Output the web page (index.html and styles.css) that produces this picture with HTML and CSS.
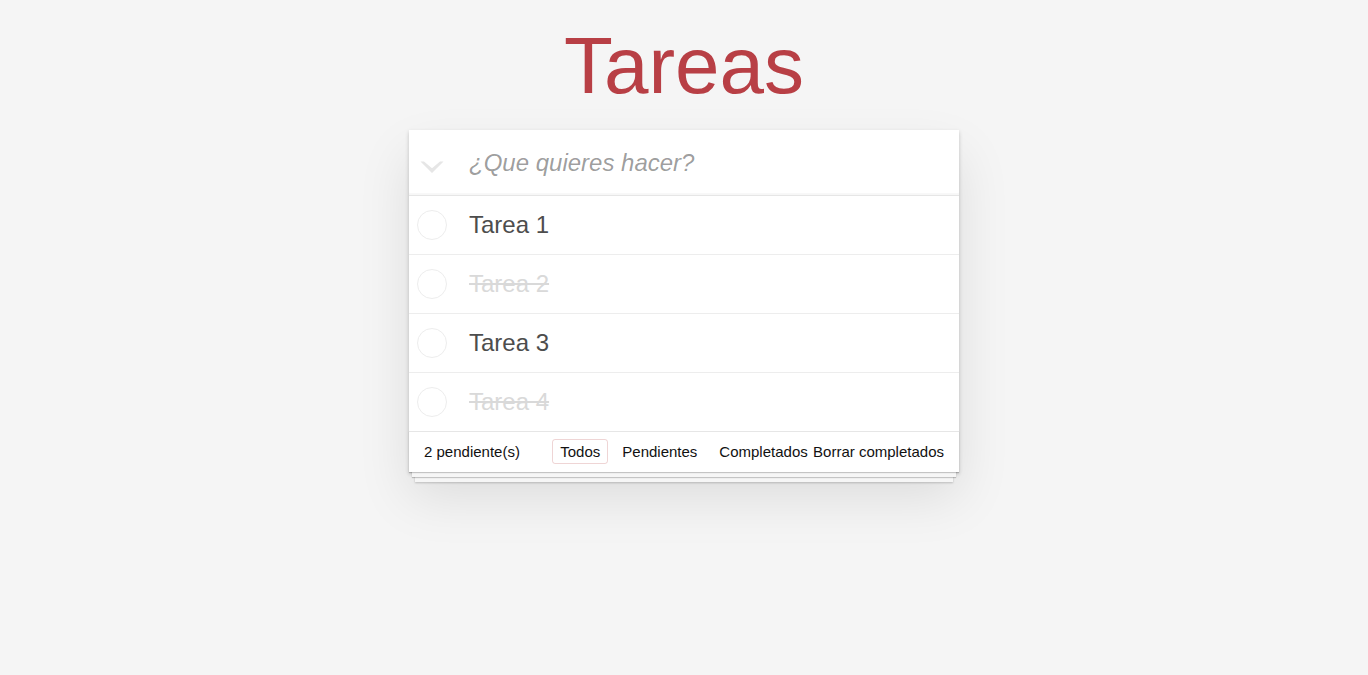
FILE: index.html
```html
<!DOCTYPE html>
<html lang="es">
<head>
<meta charset="utf-8">
<title>Tareas</title>
<link rel="stylesheet" href="styles.css">
</head>
<body>
<div class="page">
  <h1 class="title">Tareas</h1>
  <section class="todoapp">
    <header class="header">
      <span class="toggle-all">
        <svg width="24" height="13" viewBox="0 0 24 13"><path d="M0.5 0.5 L4 0.5 L12 7.2 L20 0.5 L23.5 0.5 L12 12 Z" fill="#e6e6e6"/></svg>
      </span>
      <input class="new-todo" type="text" placeholder="¿Que quieres hacer?">
    </header>
    <ul class="todo-list">
      <li class="todo">
        <span class="toggle"><svg width="32" height="32" viewBox="0 0 32 32"><circle cx="16" cy="16" r="14.5" fill="none" stroke="#ededed" stroke-width="1"/></svg></span>
        <span class="label">Tarea 1</span>
      </li>
      <li class="todo completed">
        <span class="toggle"><svg width="32" height="32" viewBox="0 0 32 32"><circle cx="16" cy="16" r="14.5" fill="none" stroke="#ededed" stroke-width="1"/></svg></span>
        <span class="label">Tarea 2</span>
      </li>
      <li class="todo">
        <span class="toggle"><svg width="32" height="32" viewBox="0 0 32 32"><circle cx="16" cy="16" r="14.5" fill="none" stroke="#ededed" stroke-width="1"/></svg></span>
        <span class="label">Tarea 3</span>
      </li>
      <li class="todo completed">
        <span class="toggle"><svg width="32" height="32" viewBox="0 0 32 32"><circle cx="16" cy="16" r="14.5" fill="none" stroke="#ededed" stroke-width="1"/></svg></span>
        <span class="label">Tarea 4</span>
      </li>
    </ul>
    <footer class="footer">
      <span class="todo-count">2 pendiente(s)</span>
      <ul class="filters"><li><a class="filter selected">Todos</a></li><li><a class="filter">Pendientes</a></li><li><a class="filter">Completados</a></li></ul>
      <span class="clear-completed">Borrar completados</span>
    </footer>
  </section>
</div>
</body>
</html>
```
FILE: styles.css
```css
html, body {
  margin: 0;
  padding: 0;
}
body {
  background: #f5f5f5;
  font-family: "Liberation Sans", Arial, sans-serif;
  font-size: 14px;
  color: #111111;
  min-height: 100vh;
}
.page {
  width: 550px;
  margin: 0 auto;
  padding-bottom: 120px;
}
.title {
  margin: 0;
  padding: 10px 0 8px;
  line-height: 112px;
  font-size: 80px;
  font-weight: 400;
  text-align: center;
  color: #b83f45;
}
.todoapp {
  position: relative;
  background: #fff;
  box-shadow: 0 2px 4px 0 rgba(0, 0, 0, 0.2), 0 25px 50px 0 rgba(0, 0, 0, 0.1);
}
.header {
  display: flex;
  height: 65px;
  box-shadow: inset 0 -2px 1px rgba(0, 0, 0, 0.03);
}
.toggle-all {
  width: 46px;
  display: flex;
  justify-content: center;
  padding-top: 31px;
  box-sizing: border-box;
}
.toggle-all svg {
  display: block;
}
.new-todo {
  flex: 1;
  min-width: 0;
  margin: 0;
  border: none;
  outline: none;
  background: transparent;
  padding: 0 16px 0 14px;
  font-family: inherit;
  font-size: 24px;
  color: #4d4d4d;
}
.new-todo::placeholder {
  font-style: italic;
  color: rgba(0, 0, 0, 0.4);
}
.todo-list {
  margin: 0;
  padding: 0;
  list-style: none;
  border-top: 1px solid #e6e6e6;
}
.todo {
  display: flex;
  align-items: center;
  height: 58px;
  border-bottom: 1px solid #ededed;
  font-size: 24px;
}
.todo:last-child {
  border-bottom: none;
}
.toggle {
  width: 46px;
  display: flex;
  justify-content: center;
}
.toggle svg {
  display: block;
}
.label {
  padding-left: 14px;
  line-height: 28px;
  color: #4d4d4d;
}
.completed .label {
  color: #d9d9d9;
  text-decoration: line-through;
}
.footer {
  position: relative;
  display: flex;
  align-items: center;
  height: 20px;
  padding: 10px 15px;
  border-top: 1px solid #e6e6e6;
  background: #fff;
  font-size: 15px;
  line-height: 20px;
  box-shadow: 0 1px 1px rgba(0, 0, 0, 0.2),
              0 8px 0 -3px #f6f6f6,
              0 9px 1px -3px rgba(0, 0, 0, 0.2),
              0 16px 0 -6px #f6f6f6,
              0 17px 2px -6px rgba(0, 0, 0, 0.2);
}
.todo-count {
  flex: 1;
}
.filters {
  position: absolute;
  left: 0;
  right: 0;
  top: 10px;
  margin: 0;
  padding: 0;
  list-style: none;
  text-align: center;
  pointer-events: none;
}
.filters li {
  display: inline;
}
.filter {
  margin: 3px;
  padding: 3px 7px;
  border: 1px solid transparent;
  border-radius: 3px;
  color: inherit;
}
.filter.selected {
  border-color: rgba(175, 47, 47, 0.2);
}
.clear-completed {
  position: relative;
}
```
